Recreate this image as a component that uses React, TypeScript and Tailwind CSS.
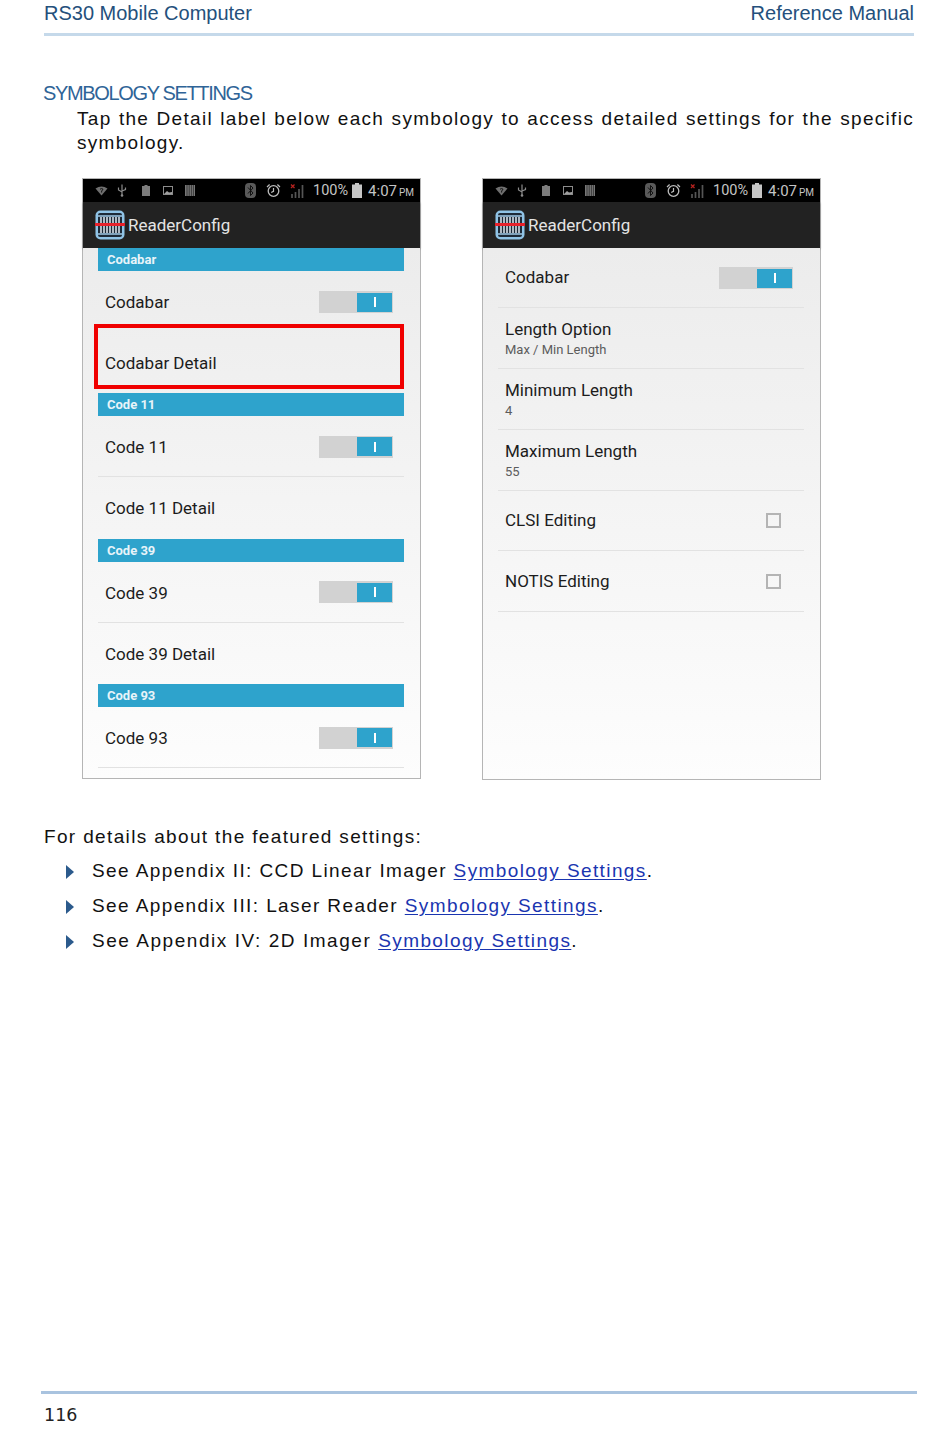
import React from "react";

const sans = "font-['Liberation_Sans',Arial,sans-serif]";
const roboto = "font-['Roboto',sans-serif]";

function WifiIcon() {
  return (
    <svg width="13" height="10" viewBox="0 0 13 10" className="ml-3 shrink-0">
      <path d="M0.5 2.5 Q6.5 -1.5 12.5 2.5 L6.5 9.5 Z" fill="#6f6f6f" />
      <path d="M5 3.2 Q6.6 2 8 3.2 L6.7 5 L6.6 6.5" stroke="#111" strokeWidth="1" fill="none" />
    </svg>
  );
}
function UsbIcon() {
  return (
    <svg width="10" height="13" viewBox="0 0 10 13" className="ml-[9px] shrink-0">
      <path d="M5 0.5V12M1.5 3.5V6L5 8M8.5 3.5V5.5L5 7" stroke="#8a8a8a" strokeWidth="1.2" fill="none" />
      <circle cx="5" cy="11.5" r="1.3" fill="#8a8a8a" />
    </svg>
  );
}
function SdIcon() {
  return (
    <svg width="8" height="11" viewBox="0 0 8 11" className="ml-[15px] shrink-0">
      <path d="M2.5 0H5.5V1H8V11H0V1H2.5Z" fill="#7c7c7c" />
    </svg>
  );
}
function ImageIcon() {
  return (
    <svg width="10" height="9" viewBox="0 0 10 9" className="ml-[13px] shrink-0">
      <rect x="0.5" y="0.5" width="9" height="8" fill="none" stroke="#8c8c8c" />
      <path d="M1 8L4 5L6 6.5L9 6V8Z" fill="#a0a0a0" />
    </svg>
  );
}
function BarsIcon() {
  return (
    <svg width="10" height="11" viewBox="0 0 10 11" className="ml-3 shrink-0">
      <path d="M0 0H10V11H0Z" fill="#777" />
      <path d="M2 0V11M4.2 0V11M6.4 0V11M8.4 0V11" stroke="#222" strokeWidth="0.7" />
    </svg>
  );
}
function BluetoothIcon() {
  return (
    <svg width="11" height="15" viewBox="0 0 11 15" className="ml-[50px] shrink-0">
      <rect x="0" y="0" width="11" height="15" rx="4" fill="#5a5a5a" />
      <path d="M3 4.5L8 10L5.5 12.5V2.5L8 5L3 10.5" stroke="#111" strokeWidth="1" fill="none" />
    </svg>
  );
}
function AlarmIcon() {
  return (
    <svg width="15" height="15" viewBox="0 0 15 15" className="ml-[10px] shrink-0">
      <circle cx="7.5" cy="8" r="5.3" fill="none" stroke="#bdbdbd" strokeWidth="1.3" />
      <path d="M7.5 5V8.3L5.2 9.6M1 4L3.6 1.5M14 4L11.4 1.5" stroke="#bdbdbd" strokeWidth="1.2" fill="none" />
    </svg>
  );
}
function SignalIcon() {
  return (
    <svg width="15" height="15" viewBox="0 0 15 15" className="ml-[9px] shrink-0">
      <path d="M1 1.5L4.5 5M4.5 1.5L1 5" stroke="#b5221f" strokeWidth="1.3" />
      <path d="M2 15V11M5.5 15V9M9 15V6M12.5 15V2" stroke="#555" strokeWidth="1.7" />
    </svg>
  );
}
function BatteryIcon() {
  return (
    <svg width="10" height="15" viewBox="0 0 10 15" className="ml-1 shrink-0">
      <path d="M3 0H7V1.5H10V15H0V1.5H3Z" fill="#c6c6c6" />
    </svg>
  );
}
function AppIcon() {
  return (
    <svg width="30" height="30" viewBox="0 0 30 30" className="shrink-0">
      <rect x="0.5" y="0.5" width="29" height="29" rx="5" fill="#8fc3e6" />
      <rect x="3" y="3" width="24" height="24" rx="2" fill="#1d2a38" />
      <path d="M3 6H27M3 24H27" stroke="#9fc9e6" strokeWidth="1.3" />
      <path d="M6 7V23M9 7V23M12 7V23M15 7V23M18 7V23M21 7V23M24 7V23" stroke="#dfe8ef" strokeWidth="1.5" />
      <rect x="0" y="13" width="30" height="3" fill="#e8202a" />
    </svg>
  );
}

function Toggle() {
  return (
    <div className="mt-[1px] flex h-[22px] w-[74px] shrink-0 items-center justify-end bg-[#d2d2d2] pr-[1px]">
      <div className="flex h-[19px] w-[35px] items-center justify-center bg-[#2ea3cc]">
        <div className="h-[10px] w-[2px] bg-white" />
      </div>
    </div>
  );
}

function Checkbox() {
  return <div className="h-[15px] w-[15px] border-2 border-[#b4b4b4]" />;
}

function Phone({ children, h }: { children: React.ReactNode; h: string }) {
  return (
    <div className={`flex w-[339px] flex-col border border-[#b5b5b5] ${h} ${roboto}`}>
      <div className="flex h-[23px] shrink-0 items-center bg-black">
        <WifiIcon />
        <UsbIcon />
        <SdIcon />
        <ImageIcon />
        <BarsIcon />
        <BluetoothIcon />
        <AlarmIcon />
        <SignalIcon />
        <span className="ml-[8px] mt-[2px] text-[14.5px] leading-none text-[#c4c4c4]">100%</span>
        <BatteryIcon />
        <span className="ml-[6px] mt-[2px] text-[15px] leading-none text-[#c4c4c4]">4:07</span>
        <span className="ml-[2px] mt-[4px] text-[10px] leading-none text-[#c4c4c4]">PM</span>
      </div>
      <div className="flex h-[46px] shrink-0 items-center gap-[3px] bg-[#222222] pl-3 shadow-[0_1px_2px_rgba(0,0,0,0.4)]">
        <AppIcon />
        <span className="text-[17px] leading-none text-[#e4e4e4]">ReaderConfig</span>
      </div>
      <div className="flex-1 bg-gradient-to-b from-[#ececec] to-[#fdfdfd] pl-[15px] pr-[16px]">{children}</div>
    </div>
  );
}

function Section({ title, name, detail, divider = true }: { title: string; name: string; detail?: string; divider?: boolean }) {
  return (
    <div className={detail ? "h-[145.4px]" : ""}>
      <div className="flex h-[23px] items-center bg-[#2ea3cc] pl-[9px] text-[13px] font-bold text-[#e8f4f9]">{title}</div>
      <div className={`flex h-[61px] items-center justify-between pl-[7px] pr-[11px] ${divider ? "border-b border-[#e2e2e2]" : ""}`}>
        <span className="pt-[3px] text-[17px] text-[#1c1c1c]">{name}</span>
        <Toggle />
      </div>
      {detail && (
        <div className="flex h-[61px] items-center pl-[7px] pt-[2px] text-[17px] text-[#1c1c1c]">{detail}</div>
      )}
    </div>
  );
}

function Row({ title, sub, check, toggle, h = "h-[61px]" }: { title: string; sub?: string; check?: boolean; toggle?: boolean; h?: string }) {
  return (
    <div className={`flex ${h} items-center justify-between border-b border-[#e2e2e2] pl-[7px] ${toggle ? "pr-[11px]" : "pr-[23px]"}`}>
      <div className={sub ? "pt-[1px]" : ""}>
        <div className="text-[17px] leading-[23px] text-[#1c1c1c]">{title}</div>
        {sub && <div className="text-[13px] leading-[18px] text-[#5c5c5c]">{sub}</div>}
      </div>
      {check && <Checkbox />}
      {toggle && <Toggle />}
    </div>
  );
}

function Bullet({ pre, tracking = "" }: { pre: string; tracking?: string }) {
  return (
    <div className="flex h-[35px] items-center">
      <svg width="8" height="14" viewBox="0 0 8 14" className="ml-[66px] shrink-0">
        <path d="M0 0L8 7L0 14Z" fill="#2b5a8c" />
      </svg>
      <span className="ml-[18px]">
        <span className={tracking}>{pre}</span>
        <span className="text-[#1a35b0] underline underline-offset-2">Symbology Settings</span>.
      </span>
    </div>
  );
}

export default function App() {
  return (
    <div className={`flex h-[1432px] w-[950px] flex-col overflow-hidden bg-white ${sans}`}>
      <header className="ml-[44px] mr-[36px] flex h-[36px] shrink-0 justify-between border-b-[3px] border-[#c5d9ea] text-[20px] leading-[26px] text-[#24507c]">
        <span>RS30 Mobile Computer</span>
        <span>Reference Manual</span>
      </header>

      <h2 className="ml-[43px] mt-[45px] text-[20px] leading-[24px] tracking-[-1.35px] text-[#2f6497]">SYMBOLOGY SETTINGS</h2>
      <p className="ml-[77px] mr-[36px] mt-[2px] text-justify text-[19px] leading-[24px] tracking-[1.3px] text-[#111]">
        Tap the Detail label below each symbology to access detailed settings for the specific symbology.
      </p>

      <div className="ml-[82px] mt-[23px] flex items-start gap-[61px]">
        <div className="relative">
          <Phone h="h-[601px]">
            <Section title="Codabar" name="Codabar" detail="Codabar Detail" divider={false} />
            <Section title="Code 11" name="Code 11" detail="Code 11 Detail" />
            <Section title="Code 39" name="Code 39" detail="Code 39 Detail" />
            <Section title="Code 93" name="Code 93" />
          </Phone>
          <div className="absolute left-[12px] top-[146px] h-[65px] w-[310px] border-4 border-[#f00000]" />
        </div>
        <Phone h="h-[602px]">
          <Row title="Codabar" toggle h="h-[60px]" />
          <Row title="Length Option" sub="Max / Min Length" />
          <Row title="Minimum Length" sub="4" />
          <Row title="Maximum Length" sub="55" />
          <Row title="CLSI Editing" check h="h-[60px]" />
          <Row title="NOTIS Editing" check />
        </Phone>
      </div>

      <div className="mt-[39px] text-[19px] tracking-[1.4px] text-[#111]">
        <p className="ml-[44px] h-[35px] leading-[35px] tracking-[1.35px]">For details about the featured settings:</p>
        <Bullet pre="See Appendix II: CCD Linear Imager " />
        <Bullet pre="See Appendix III: Laser Reader " />
        <Bullet pre="See Appendix IV: 2D Imager " tracking="tracking-[1.55px]" />
      </div>

      <footer className="ml-[41px] mr-[33px] mt-auto h-[41px] border-t-[3px] border-[#a9c3df] pl-[3px] pt-[9px] font-['DejaVu_Sans',sans-serif] text-[17.5px] leading-[24px] text-[#222]">
        116
      </footer>
    </div>
  );
}
